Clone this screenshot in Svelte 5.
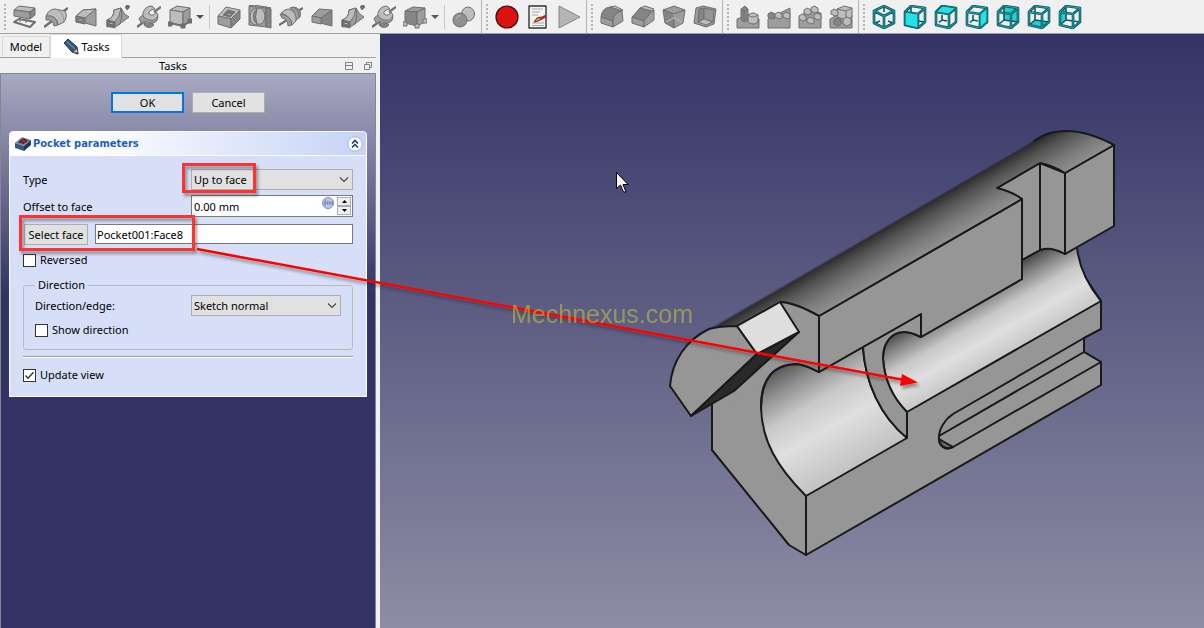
<script>
  const D = '#858585', M = '#9d9d9d', L = '#bdbdbd', X = '#6f6f6f';
  const icons = {
    pad: [['M6 1 22 3 17 7 1 5z', L], ['M1 5 17 7V14L1 11z', M], ['M17 7 22 3V10L17 14z', D], ['M1 17 6 14 22 17 17 22z', 'none', X, 2], ['M7 12V17M13 13V18', 'none']],
    revolve: [['M0 22 8 16M17 8 24 3', 'none', X, 2.5], ['M2 11Q5 4 11 4L21 6Q24 11 20 17L14 20Q14 11 2 11z', L], ['M2 11Q12 9 14 20L10 21Q9 14 2 15z', M], ['M11 4Q20 7 20 17', 'none', '#999']],
    loft: [['M8 5 21 4V21L10 18 1 17V11z', M], ['M8 5 21 4 10 13 1 11z', L], ['M1 11 10 13V19L1 17z', D], ['M3 13 8 14V17L3 16z', M]],
    pipe: [['M8 5 15 3Q18 10 23 12L11 21 1 22V15Q8 13 8 5z', M], ['M8 5 15 3Q14 12 9 17L1 15Q8 13 8 5z', L], ['M1 15 9 17V23L1 21z', X], ['M3 17 7 18V20L3 19z', L], ['M15 3Q17 14 13 20', 'none'], ['M20 2 22 0 23 2 21 4z', D, X, 2]],
    helix: [['M0 22 8 16M17 7 24 2', 'none', X, 2.2], ['M2 14Q4 9 10 11Q18 14 19 9L21 12Q20 19 13 18Q6 15 5 19z', M], ['M6 8Q8 1 15 1L18 4Q11 5 12 9Q17 12 19 7L21 10Q19 17 12 15Q5 13 6 8z', L], ['M8 17Q10 20 15 18L17 20Q12 25 7 20z', D]],
    prim: [['M2 5 9 1 22 3 15 7z', L], ['M2 5 15 7V21L2 18z', L], ['M15 7 22 3V17L15 21z', M], ['M2 18 15 21 22 16', 'none', X, 2], ['M0 17h4v4H0zM13 19h4v4H13zM20 14h4v4H20z', X]],
    pocket: [['M1 11 9 2 23 5 14 14z', L], ['M1 11 14 14V23L1 19z', M], ['M14 14 23 5V14L14 23z', D], ['M6 10 11 5 18 7 13 12z', '#777'], ['M8 10 12 8 15 9 13 11z', M]],
    hole: [['M1 1 18 2V22L1 20z', M], ['M18 2 23 4V23L18 22z', D], ['M1 1 6 0 23 3 18 3z', L], ['M9 4A5.500 8 0 1 0 10 19A5.500 8 0 1 0 9 4z', L], ['M9 4A5.500 8 0 0 0 9 19Q6 12 9 4z', D]],
    groove: [['M0 20 8 15M17 7 24 3', 'none', X, 2.2], ['M11 3Q14 1 18 3Q23 6 21 12L17 15Q17 6 11 3z', M], ['M2 8Q6 4 10 4Q18 7 17 16L13 20Q12 11 2 8z', L], ['M1 9Q12 10 13 20L9 21Q9 14 3 13z', M], ['M14 2Q21 5 20 13', 'none']],
    subloft: [['M9 4 22 5 11 13 2 11z', M], ['M22 5V21L10 18 11 13z', D], ['M2 11 11 13V19L2 17z', M]],
    mirror: [['M2 6 10 2 22 3 14 7z', M], ['M2 6 14 7V21L2 18z', D], ['M14 7 22 3V17L14 21z', M], ['M0 17h4v4H0zM12 19h4v4H12zM20 14h4v4H20z', L]],
    bool: [['M16 2A6.500 7 0 1 1 16 16A6.500 7 0 1 1 16 2z', L], ['M8 8A7 7 0 1 1 8 22A7 7 0 1 1 8 8z', '#8f8f8f'], ['M4 14Q5 10 9 11', 'none', L]],
    record: [['M12 1A11 11 0 1 1 12 23A11 11 0 1 1 12 1z', '#df1010', '#3b0d0d', 1.2]],
    macro: [['M3 1H20V23H3z', '#f3f3f3', '#333', 1.4], ['M6 4H17M6 7H14M6 10H12M6 18H18M6 20.500H18', 'none', '#a5a5a5'], ['M8 17 11 13 15 12 16 14 12 16z', '#e8a030', '#5d2a10', 1], ['M14 14 20 11', 'none', '#c4201b', 2.6]],
    play: [['M2 1 23 12 2 23z', '#b5b5b5', '#858585']],
    fillet: [['M1 12Q2 3 10 2L22 6Q14 7 13 16z', D], ['M10 2 15 1 23 5 22 6z', L], ['M1 12 13 16V22L1 18z', M], ['M13 16Q14 7 22 6L23 16 13 22z', M]],
    chamfer: [['M1 12 9 3 21 6 13 16z', D], ['M9 3 14 1 23 4 21 6z', L], ['M1 12 13 16V22L1 18z', M], ['M13 16 21 6 23 5V15L13 22z', M]],
    draft: [['M1 5 12 1 23 5 12 9z', M], ['M1 5 12 9V23L3 18z', D], ['M12 9 23 5 21 18 12 23z', M], ['M4 17 12 13 20 17M12 9V13', 'none', L]],
    thick: [['M3 3 10 1 23 4 21 19 13 22 1 18z', M], ['M6 4 11 3V14L5 17z', D], ['M11 3 21 5 20 17 11 14z', '#959595'], ['M5 17 11 14 20 17 13 20z', L]],
    mirrored: [['M1 14 9 11 23 14V23H1z', M], ['M5 4 9 1 12 4V15L8 17 5 14z', D], ['M5 4 8 6V17M8 6 12 4', 'none'], ['M12 10Q17 6 22 10V17Q17 21 12 17z', L], ['M12 10Q17 14 22 10', 'none']],
    linear: [['M1 14 23 3V23H1z', M], ['M1 9 4 7 8 9V13L5 14 1 12z', D], ['M8 9 11 7 15 9V13L12 14 8 12z', L], ['M16 9 19 7 23 9V13L20 14 16 12z', L]],
    polar: [['M1 14 9 5 23 8V23H1z', M], ['M1 11 4 9 8 11V15L5 16 1 14zM6 5 9 3 13 5V9L10 10 6 8z', L], ['M13 3 16 1 20 3V7L17 8 13 6zM16 10 19 8 23 10V14L20 15 16 13zM9 14 12 12 16 14V18L13 19 9 17z', L]],
    multi: [['M1 14 12 8 23 10V23H1z', M], ['M8 4 15 1 23 3V12L17 15 8 12z', L], ['M8 4 17 6 23 3M17 6V15', 'none'], ['M2 6 5 4 9 6V10L6 11 2 9zM14 14 18 12 22 14V19L18 21 14 19z', L], ['M5 15 9 13 12 15V19L9 21 5 19z', D]]
  };
  const outer = 'M2 7 8 1 22 3V17L15 23 2 20zM2 7 15 9 22 3M15 9V23';
  const back = 'M8 1V15L2 20M8 15 22 17';
  const stubs = 'M8 15V10M8 15 5 17.500M8 15 13 16';
  const hexa = 'M12 1 22 6V18L12 23 2 18V6zM2 6 12 11 22 6M12 11V23';
  const views = [
    { name: 'Isometric', wire: hexa, inner: 'M12 2V7M3 18 8 16M21 18 16 16' },
    { name: 'Front', wire: outer, inner: back, over: 'M2 7 15 9V23L2 20z' },
    { name: 'Top', wire: outer, inner: stubs, over: 'M2 7 8 1 22 3 15 9z' },
    { name: 'Right', wire: outer, inner: stubs, over: 'M15 9 22 3V17L15 23z' },
    { name: 'Rear', wire: outer, inner: back, under: 'M8 1 22 3V17L8 15z' },
    { name: 'Bottom', wire: outer, inner: back, under: 'M2 20 8 15 22 17 15 23z' },
    { name: 'Left', wire: outer, inner: back, under: 'M2 7 8 1V15L2 20z' }
  ];
  const part1 = ['pad', 'revolve', 'loft', 'pipe', 'helix', 'prim'];
  const part2 = ['pocket', 'hole', 'groove', 'subloft', 'pipe', 'helix', 'mirror'];
  const macroTools = ['record', 'macro', 'play'];
  const dress = ['fillet', 'chamfer', 'draft', 'thick'];
  const patterns = ['mirrored', 'linear', 'polar', 'multi'];
  let type = $state('Up to face');
  let offset = $state('0.00 mm');
  let face = $state('Pocket001:Face8');
  let dir = $state('Sketch normal');
  let reversed = $state(false);
  let showDir = $state(false);
  let update = $state(true);
</script>

{#snippet tool(name)}
  <button class="tool" aria-label={name}>
    <svg width="24" height="24" viewBox="0 0 24 24">
      {#each icons[name] as s}
        <path d={s[0]} fill={s[1]} stroke={s[2] ?? X} stroke-width={s[3] ?? 1} stroke-linejoin="round" />
      {/each}
    </svg>
  </button>
{/snippet}
{#snippet drop()}
  <button class="drop" aria-label="More"><svg width="8" height="4" viewBox="0 0 8 4"><path d="M0 0H8L4 4z" fill="#555" /></svg></button>
{/snippet}
{#snippet chevron()}
  <svg class="chev" width="10" height="6" viewBox="0 0 10 6"><path d="M1 .5 5 4.500 9 .5" fill="none" stroke="#444" stroke-width="1.1" /></svg>
{/snippet}
{#snippet check(on)}
  {#if on}<svg class="tick" width="13" height="13" viewBox="0 0 13 13"><path d="M2.500 6.500 5 9.200 10.500 3.200" fill="none" stroke="#333" stroke-width="1.400" /></svg>{/if}
{/snippet}

<div class="app">
  <header class="toolbar">
    <div class="group">
      <i class="grip"></i>
      {#each part1 as n}{@render tool(n)}{/each}
      {@render drop()}<i class="sep"></i>
      {#each part2 as n}{@render tool(n)}{/each}
      {@render drop()}<i class="sep"></i>
      {@render tool('bool')}
    </div>
    <div class="group"><i class="grip"></i>{#each macroTools as n}{@render tool(n)}{/each}</div>
    <div class="group"><i class="grip"></i>{#each dress as n}{@render tool(n)}{/each}</div>
    <div class="group"><i class="grip"></i>{#each patterns as n}{@render tool(n)}{/each}</div>
    <div class="group last">
      <i class="grip"></i>
      {#each views as v}
        <button class="tool" aria-label={v.name}>
          <svg width="24" height="24" viewBox="0 0 24 24" stroke-linejoin="round" fill="none">
            {#if v.under}<path d={v.under} fill="#27cdd3" />{/if}
            <path d={v.inner} stroke="#0a5a61" stroke-width="1.600" />
            <path d={v.wire} stroke="#07575e" stroke-width="2.600" />
            <path d={v.wire} stroke="#2fb5bb" stroke-width=".8" />
            {#if v.over}<path d={v.over} fill="#2adfe4" stroke="#0b7077" stroke-width="1.200" />{/if}
          </svg>
        </button>
      {/each}
    </div>
  </header>

  <div class="main">
    <aside>
      <nav>
        <button class="tab">Model</button>
        <button class="tab active">
          <svg width="16" height="16" viewBox="0 0 16 16"><path d="M1 4 5 0 14 8 15 15 9 13z" fill="#35597c" stroke="#1d3348" /><path d="M3.500 2.500 12 10" stroke="#5d86ab" stroke-width="1.500" /><path d="M10 13 14 9.500 15 15z" fill="#d9cdb4" stroke="#1d3348" stroke-width=".7" /><path d="M13 13 15 15 12.500 14.500z" fill="#222" /></svg>
          Tasks
        </button>
      </nav>
      <div class="title">
        <span>Tasks</span>
        <svg width="8" height="8" viewBox="0 0 8 8"><path d="M.5 .5H7.500V7.500H.5zM.5 3.500H7.500" fill="none" stroke="#808080" /></svg>
        <svg width="8" height="8" viewBox="0 0 8 8"><path d="M.5 2.500H5.500V7.500H.5zM2.500 2.500V.5H7.500V5.500H5.500" fill="none" stroke="#808080" /></svg>
      </div>
      <div class="panel">
        <div class="actions"><button class="btn ok">OK</button><button class="btn">Cancel</button></div>
        <section class="card">
          <h2>
            <svg width="16" height="14" viewBox="0 0 16 14"><path d="M0 6 7 0 16 3 9 9z" fill="#6687a9" /><path d="M0 6 9 9V14L0 11z" fill="#38587a" /><path d="M9 9 16 3V8L9 14z" fill="#22384f" /><path d="M4 5 8 2 12 3.500 9 6.500z" fill="#d01818" stroke="#35141c" /></svg>
            <span>Pocket parameters</span>
            <button class="fold" aria-label="Collapse"><svg width="16" height="16" viewBox="0 0 16 16"><circle cx="8" cy="8" r="7.200" fill="#fff" stroke="#a9b4cf" /><path d="M5 7.500 8 4.500 11 7.500M5 11.500 8 8.500 11 11.500" fill="none" stroke="#153a84" stroke-width="1.600" /></svg></button>
          </h2>
          <div class="body">
            <div class="row">
              <label for="type">Type</label>
              <div class="combo"><select id="type" bind:value={type}><option>Up to face</option><option>Dimension</option></select>{@render chevron()}</div>
            </div>
            <div class="row spinrow">
              <label for="off">Offset to face</label>
              <div class="spin">
                <input id="off" bind:value={offset} />
                <svg width="12" height="12" viewBox="0 0 12 12"><circle cx="6" cy="6" r="5.500" fill="#b8c9e4" stroke="#7d90b3" /><path d="M3 9V4.500Q3 3 4.500 3M2 6H4.500M6 4Q5 6 6 8M7 4.500 9 7.500M9 4.500 7 7.500M10 4Q11 6 10 8" fill="none" stroke="#56709c" stroke-width=".8" /></svg>
                <div class="steps">
                  <button aria-label="Increase"><svg width="5" height="3" viewBox="0 0 5 3"><path d="M0 3H5L2.500 0z" /></svg></button>
                  <button aria-label="Decrease"><svg width="5" height="3" viewBox="0 0 5 3"><path d="M0 0H5L2.500 3z" /></svg></button>
                </div>
              </div>
            </div>
            <div class="facerow"><button class="btn pick">Select face</button><input class="edit" aria-label="Face" bind:value={face} /></div>
            <label class="check"><input type="checkbox" bind:checked={reversed} />{@render check(reversed)}<span>Reversed</span></label>
            <fieldset>
              <legend>Direction</legend>
              <div class="row">
                <label for="dir">Direction/edge:</label>
                <div class="combo"><select id="dir" bind:value={dir}><option>Sketch normal</option></select>{@render chevron()}</div>
              </div>
              <label class="check"><input type="checkbox" bind:checked={showDir} />{@render check(showDir)}<span>Show direction</span></label>
            </fieldset>
            <hr />
            <label class="check"><input type="checkbox" bind:checked={update} />{@render check(update)}<span>Update view</span></label>
          </div>
        </section>
      </div>
    </aside>

    <main>
      <svg viewBox="380 34 824 594" preserveAspectRatio="xMinYMin meet">
        <defs>
          <linearGradient id="top" gradientUnits="userSpaceOnUse" x1="870" y1="237" x2="892" y2="275"><stop offset="0" stop-color="#2c2c2c" /><stop offset=".25" stop-color="#525252" /><stop offset=".65" stop-color="#7b7b7b" /><stop offset="1" stop-color="#929292" /></linearGradient>
          <linearGradient id="bore1" gradientUnits="userSpaceOnUse" x1="773" y1="372" x2="835" y2="479"><stop offset="0" stop-color="#585858" /><stop offset=".15" stop-color="#8a8a8a" /><stop offset=".38" stop-color="#c8c8c8" /><stop offset=".62" stop-color="#dfdfdf" /><stop offset="1" stop-color="#c2c2c2" /></linearGradient>
          <linearGradient id="bore2" gradientUnits="userSpaceOnUse" x1="890" y1="338" x2="926" y2="401"><stop offset="0" stop-color="#505050" /><stop offset=".18" stop-color="#888" /><stop offset=".42" stop-color="#c8c8c8" /><stop offset=".68" stop-color="#dfdfdf" /><stop offset="1" stop-color="#c8c8c8" /></linearGradient>
        </defs>
        <g stroke="#191919" stroke-width="2" stroke-linejoin="round" stroke-linecap="round" fill="#969696">
          <path d="M712 400V450L789 545 806 555 1101 385V362L1084 352V338L1101 329V301L1060 240 819 300 740 350z" />
          <path d="M883 358C883 341 893 332 904 332 912 332 916 335 921 337L1022 279V260L1040 250C1048 247 1058 250 1065 254L1077 247C1079 268 1087 284 1101 301L907 412C890 395 884 376 883 358z" fill="url(#bore2)" />
          <path d="M806 496C776 466 762 440 761 408 761 381 771 365 795 364 805 364 812 369 819 372L863 347C865 382 880 416 907 438z" fill="url(#bore1)" />
          <path d="M863 347 921 314V337C916 335 912 332 904 332 893 332 883 341 883 358 884 376 890 395 907 412V438C880 416 865 382 863 347z" />
          <path d="M806 496V555" />
          <path d="M1084 338 953 414C944 420 939 430 939 437 938 447 946 451 953 447L1101 362 1084 352 939 436" />
          <path d="M939 439 953 447C947 450 940 447 939 439z" fill="#686868" />
          <path d="M819 316 1022 199V279L921 337V314L819 372z" />
          <path d="M1022 199V260L1040 250V163L997 188z" />
          <path d="M1040 163 1065 173V254C1058 250 1048 247 1040 250z" />
          <path d="M1065 173 1114 145V226L1065 254z" />
          <path d="M709 330 1028 145C1041 136 1048 131 1067 131 1084 131 1099 137 1114 145L1065 173C1057 168 1049 165 1040 163L997 188C1006 190 1015 194 1022 199L819 316C806 309 794 303 780 302L737 326 718 326z" fill="url(#top)" stroke="none" />
          <path d="M1034 141C1043 135 1051 131 1067 131 1084 131 1099 137 1114 145L1065 173C1057 168 1049 165 1040 163L997 188C1006 190 1015 194 1022 199L819 316C806 309 794 303 780 302" fill="none" />
          <path d="M780 302C794 303 806 309 819 316V372C812 369 805 364 795 364 779 364 770 371 764 385L712 415V404L734 391 799 332z" stroke="none" />
          <path d="M780 302C794 303 806 309 819 316V372C812 369 805 364 795 364 771 365 761 381 761 408M712 402V450" fill="none" />
          <path d="M670 386C672 361 686 340 709 329Q719 326 737 326L757 354 691 416z" />
          <path d="M691 416 757 354 799 332 734 391z" fill="#292929" />
          <path d="M737 326 780 302 799 332 757 354z" fill="#dedede" />
          <path d="M709 329 1034 141" stroke-width="1" opacity=".35" />
        </g>
        <path d="M616.500 172.500V188.500L620.500 185 623.500 192H626L623 184.500H628z" fill="#fff" stroke="#000" />
      </svg>
    </main>
  </div>

  <svg class="notes" width="1204" height="628" viewBox="0 0 1204 628">
    <defs><filter id="sh" x="-5%" y="-20%" width="110%" height="150%"><feDropShadow dx="2" dy="3" stdDeviation="1.500" flood-color="#222" flood-opacity=".45" /></filter></defs>
    <g filter="url(#sh)">
      <path d="M183.500 164.500H254.500V191.500H183.500zM20.500 216.500H193.500V249.500H20.500z" fill="none" stroke="#ff3333" stroke-width="3" />
      <path d="M197 249 904 380" stroke="#f00" stroke-width="2.500" />
      <path d="M918 382.500 902 374 900 386z" fill="#f00" />
    </g>
    <text x="511" y="323" fill="#cfcf38" opacity=".5">Mechnexus.com</text>
  </svg>
</div>

<style>
  :global(body) { margin: 0; }
  .app { position: relative; display: flex; flex-direction: column; height: 100vh; overflow: hidden; background: #f0f0f0; font: 11px/16px "Noto Sans", sans-serif; color: #000; }
  .app * { box-sizing: border-box; }
  button, input, select { font: inherit; color: inherit; margin: 0; padding: 0; border: 0; border-radius: 0; }
  svg { display: block; flex: none; }
  .toolbar { display: flex; height: 34px; flex: none; border-bottom: 1px solid #a0a0a0; }
  .group { display: flex; align-items: center; padding-right: 2px; border-right: 1px solid #b4b4b4; }
  .last { border: 0; }
  .grip { width: 2px; height: 26px; margin: 0 3px 0 4px; background: repeating-linear-gradient(#b5b5b5 0 2px, transparent 2px 4px); }
  .tool { display: grid; place-items: center; width: 31px; height: 32px; background: none; }
  .drop { display: grid; place-items: center; width: 10px; height: 32px; background: none; }
  .sep { width: 1px; height: 24px; margin: 0 3px 0 4px; background: #c8c8c8; }
  .main { display: flex; flex: 1; min-height: 0; }
  aside { display: flex; flex-direction: column; width: 380px; flex: none; padding-right: 4px; }
  nav { display: flex; align-items: flex-end; height: 24px; padding-left: 2px; border-bottom: 1px solid #a0a0a0; }
  .tab { height: 21px; width: 48px; border: 1px solid #d9d9d9; border-bottom: 0; background: #f0f0f0; }
  .active { display: flex; align-items: center; justify-content: center; gap: 3px; width: 72px; height: 24px; margin-bottom: -1px; background: #fff; }
  .title { display: flex; align-items: center; gap: 11px; height: 15px; padding-right: 4px; }
  .title span { flex: 1; text-align: center; padding-left: 12px; }
  .panel { flex: 1; border: 1px solid #828790; border-bottom: 0; padding: 18px 8px; background: linear-gradient(#a9a9c2, #333366 220px); }
  .actions { display: flex; justify-content: center; gap: 8px; margin-bottom: 18px; }
  .btn { width: 73px; height: 21px; background: #e1e1e1; border: 1px solid #adadad; }
  .ok { border: 2px solid #0078d7; }
  .card { border: 1px solid #fff; border-radius: 4px 4px 0 0; background: #d6dff7; }
  h2 { display: flex; align-items: center; gap: 2px; height: 24px; margin: 0; padding: 0 3px 0 5px; border-bottom: 1px solid #fff; border-radius: 3px 3px 0 0; background: linear-gradient(90deg, #fff 20%, #c6d3f7); font: bold 11px/16px "DejaVu Sans Condensed", "Noto Sans", sans-serif; color: #215dc6; }
  h2 span { flex: 1; }
  .fold { background: none; }
  .body { padding: 13px; }
  .row { display: grid; grid-template-columns: 168px minmax(0, 1fr); align-items: center; }
  .combo { display: grid; align-items: center; }
  select { grid-area: 1 / 1; width: 100%; height: 21px; padding: 0 2px; appearance: none; background: #e1e1e1; border: 1px solid #adadad; }
  .chev { grid-area: 1 / 1; justify-self: end; margin-right: 4px; pointer-events: none; }
  .spinrow { margin-top: 5px; }
  .spinrow label { padding-top: 2px; }
  .spin { display: flex; height: 22px; background: #fff; border: 1px solid #7a7a7a; padding: 1px; gap: 3px; }
  .spin input { flex: 1; min-width: 0; padding: 2px 0 0 1px; background: none; outline: 0; }
  .steps { display: flex; flex-direction: column; width: 14px; }
  .steps button { flex: 1; display: grid; place-items: center; background: #f0f0f0; border: 1px solid #adadad; }
  .facerow { display: flex; gap: 7px; margin: 7px 0 7px; padding-left: 1px; }
  .pick { width: 64px; }
  .edit { flex: 1; min-width: 0; height: 20px; padding: 0 1px; border: 1px solid #7a7a7a; background: #fff; }
  .check { display: grid; grid-template-columns: 13px 1fr; column-gap: 4px; align-items: center; }
  .check input { grid-area: 1 / 1; appearance: none; width: 13px; height: 13px; border: 1px solid #333; background: #fff; }
  .tick { grid-area: 1 / 1; z-index: 1; pointer-events: none; }
  .check span { grid-column: 2; }
  fieldset { margin: 9px 0 6px; padding: 2px 11px 11px; border: 1px solid #b9b9b9; border-radius: 3px; }
  fieldset .row { grid-template-columns: 156px minmax(0, 1fr); margin-bottom: 6px; }
  legend { padding: 0 3px; }
  hr { height: 2px; margin: 0 0 9px; border: 0; border-top: 1px solid #a0a0a0; background: #fff; }
  main { flex: 1; min-width: 0; background: linear-gradient(#333366, #8d8da5); }
  main svg { width: 100%; height: 100%; }
  .notes { position: absolute; left: 0; top: 0; pointer-events: none; }
  text { font: 25px "Liberation Sans", sans-serif; }
</style>
